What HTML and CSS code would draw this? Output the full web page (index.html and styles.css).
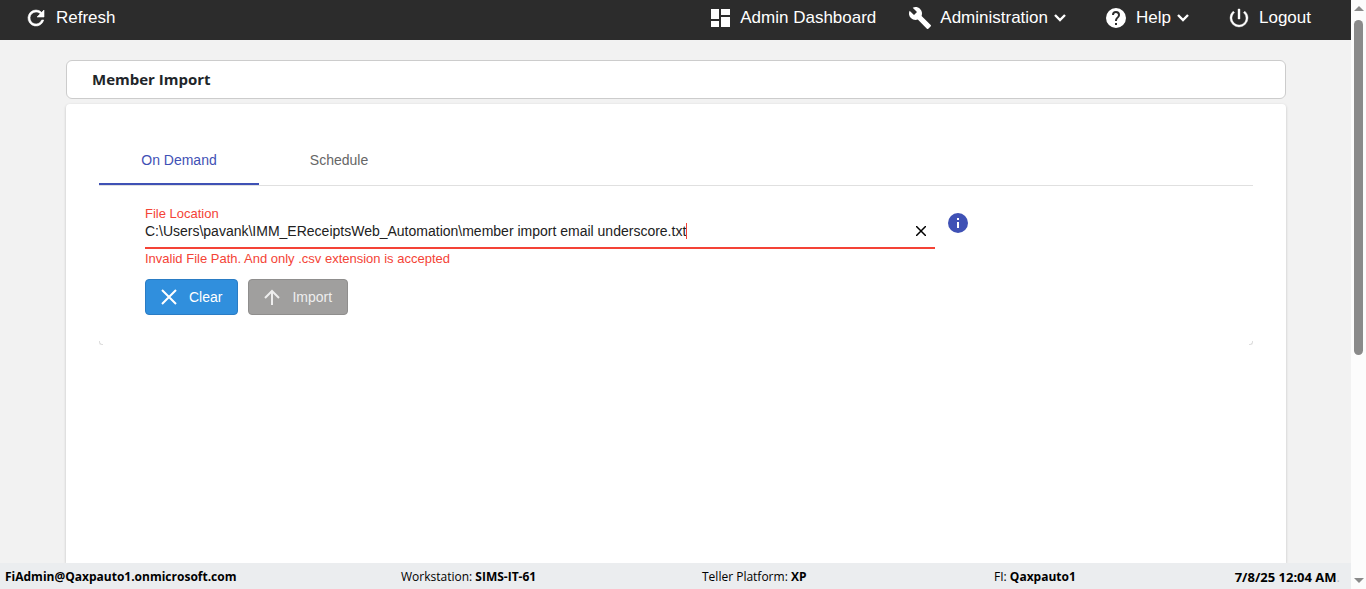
FILE: index.html
```
<!DOCTYPE html>
<html lang="en">
<head>
<meta charset="utf-8">
<meta name="viewport" content="width=device-width, initial-scale=1">
<title>Member Import</title>
<link rel="stylesheet" href="styles.css">
</head>
<body>
<div class="shell">
  <div class="app">
    <header class="topbar">
      <button class="nav-item" type="button">
        <svg class="icon" viewBox="0 0 24 24"><path d="M17.65 6.35A7.96 7.96 0 0 0 12 4a8 8 0 1 0 7.73 10h-2.08A6 6 0 1 1 12 6c1.66 0 3.14.69 4.22 1.78L13 11h7V4z" stroke="currentColor" stroke-width=".6"/></svg>
        <span>Refresh</span>
      </button>
      <nav class="nav">
        <a class="nav-item" href="#">
          <svg class="icon" viewBox="0 0 24 24"><path d="M3 3h8v10H3zM13 3h9v6h-9zM3 15h8v6H3zM13 11h9v10h-9z"/></svg>
          <span>Admin Dashboard</span>
        </a>
        <button class="nav-item" type="button">
          <svg class="icon" viewBox="0 0 24 24"><path d="M22.7 19l-9.1-9.1c.9-2.3.4-5-1.5-6.9-2-2-5-2.4-7.4-1.3L9 6 6 9 1.6 4.7C.4 7.100.900 10.100 2.900 12.100c1.900 1.900 4.600 2.400 6.900 1.500l9.100 9.100c.4.4 1 .4 1.400 0l2.300-2.300c.5-.4.5-1.100.1-1.400z"/></svg>
          <span>Administration</span>
          <svg class="chevron" viewBox="0 0 12 8"><path d="M1 1l5 5 5-5"/></svg>
        </button>
        <button class="nav-item" type="button">
          <svg class="icon" viewBox="0 0 24 24"><path d="M12 2a10 10 0 1 0 0 20 10 10 0 0 0 0-20zm1 17h-2v-2h2zm2.070-7.750l-.9.920C13.450 12.900 13 13.500 13 15h-2v-.5c0-1.100.450-2.100 1.170-2.830l1.240-1.260A2 2 0 1 0 10 9H8a4 4 0 1 1 8 0c0 .880-.360 1.680-.930 2.250z"/></svg>
          <span>Help</span>
          <svg class="chevron" viewBox="0 0 12 8"><path d="M1 1l5 5 5-5"/></svg>
        </button>
        <button class="nav-item" type="button">
          <svg class="icon" viewBox="0 0 24 24"><path d="M13 3h-2v10h2zm4.830 2.170l-1.420 1.420A6.920 6.920 0 0 1 19 12a7 7 0 1 1-11.420-5.420L6.170 5.170A8.930 8.930 0 0 0 3 12a9 9 0 0 0 18 0c0-2.740-1.230-5.180-3.170-6.830z" stroke="currentColor" stroke-width=".4"/></svg>
          <span>Logout</span>
        </button>
      </nav>
    </header>

    <main class="content">
      <h1 class="title">Member Import</h1>
      <section class="card">
        <div class="tabs" role="tablist">
          <button class="tab tab-active" type="button" role="tab" aria-selected="true">On Demand</button>
          <button class="tab" type="button" role="tab" aria-selected="false">Schedule</button>
        </div>
        <form class="panel">
          <div class="row">
            <div class="field">
              <label class="label" for="file">File Location</label>
              <div class="control">
                <input class="input" id="file" type="text" spellcheck="false" aria-invalid="true" aria-describedby="file-error" value="C:\Users\pavank\IMM_EReceiptsWeb_Automation\member import email underscore.txt">
                <span class="caret"></span>
                <button class="wipe" type="button" aria-label="Clear file location">
                  <svg viewBox="0 0 10 10"><path d="M0 0l10 10M10 0L0 10"/></svg>
                </button>
              </div>
              <p class="error" id="file-error">Invalid File Path. And only .csv extension is accepted</p>
            </div>
            <button class="info" type="button" aria-label="Information">
              <svg viewBox="0 0 20 20"><circle cx="10" cy="10" r="10" fill="#3f51b5"/><path d="M9 5h2v2H9zM9 9h2v6H9z" fill="#fff"/></svg>
            </button>
          </div>
          <div class="actions">
            <button class="btn btn-clear" type="button">
              <svg viewBox="0 0 16 16"><path d="M1 1l14 14M15 1L1 15"/></svg>Clear
            </button>
            <button class="btn btn-import" type="button" disabled>
              <svg viewBox="0 0 16 16"><path d="M8 16V2M1 9l7-7 7 7"/></svg>Import
            </button>
          </div>
        </form>
      </section>
    </main>

    <footer class="status">
      <span><b>FiAdmin@Qaxpauto1.onmicrosoft.com</b></span>
      <span>Workstation: <b>SIMS-IT-61</b></span>
      <span>Teller Platform: <b>XP</b></span>
      <span>FI: <b>Qaxpauto1</b></span>
      <span class="clock"><b>7/8/25 12:04 AM</b><i class="dot">.</i></span>
    </footer>
  </div>

  <div class="scrollbar" aria-hidden="true">
    <svg class="arrow" viewBox="0 0 10 5"><path d="M0 5l5-5 5 5z"/></svg>
    <div class="track"><div class="thumb"></div></div>
    <svg class="arrow" viewBox="0 0 10 5"><path d="M0 0l5 5 5-5z"/></svg>
  </div>
</div>
</body>
</html>
```
FILE: styles.css
```
* { box-sizing: border-box; }

body {
  margin: 0;
  font-family: "Liberation Sans", Arial, sans-serif;
  font-size: 14px;
  color: #212529;
  background: #f2f2f2;
}

button, input { font: inherit; color: inherit; }
button { margin: 0; padding: 0; border: 0; background: none; cursor: pointer; }
svg { display: block; flex: none; }

.shell { display: flex; height: 100vh; }
.app { flex: 1; min-width: 0; display: flex; flex-direction: column; }

.topbar {
  flex: none;
  display: flex;
  justify-content: space-between;
  height: 40px;
  padding: 0 40px 5px 24px;
  background: #2c2c2c;
  color: #fff;
}
.nav { display: flex; gap: 32px; }
.nav-item {
  display: flex;
  align-items: center;
  font-size: 17px;
  white-space: nowrap;
  color: #fff;
  text-decoration: none;
}
.icon { width: 24px; height: 24px; margin-right: 8px; fill: currentColor; }
.chevron { width: 12px; height: 8px; margin: 0 6px; fill: none; stroke: currentColor; stroke-width: 2.4; }

.content {
  flex: 1;
  min-height: 0;
  overflow: hidden;
  display: flex;
  flex-direction: column;
  gap: 5px;
  padding: 20px 65px 0 66px;
}
.title {
  flex: none;
  margin: 0;
  padding: 9px 25px;
  border: 1px solid #ccc;
  border-radius: 6px;
  background: #fff;
  font: 700 15px/19px "Open Sans", "Noto Sans", sans-serif;
}
.card {
  flex: 1;
  padding: 33px;
  border-radius: 4px 4px 0 0;
  background: #fff;
  box-shadow: 0 1px 3px rgba(0, 0, 0, .2);
}

.tabs { display: flex; border-bottom: 1px solid #e0e0e0; }
.tab { width: 160px; height: 48px; color: #666; border-bottom: 2px solid transparent; }
.tab-active { color: #3f51b5; border-bottom-color: #3f51b5; }

.panel {
  position: relative;
  padding: 20px 46px 30px;
}
.panel::before,
.panel::after {
  content: "";
  position: absolute;
  bottom: 0;
  width: 3px;
  height: 3px;
  border-bottom: 1px solid #ddd;
}
.panel::before { left: 0; border-left: 1px solid #ddd; border-bottom-left-radius: 3px; }
.panel::after { right: 0; border-right: 1px solid #ddd; border-bottom-right-radius: 3px; }

.row { display: flex; gap: 13px; }
.field { flex: 0 1 790px; min-width: 0; }
.label { display: block; font-size: 13px; line-height: 16px; color: #f44336; }
.control {
  display: flex;
  align-items: center;
  height: 27px;
  padding: 0 9px 8px 0;
  border-bottom: 2px solid #f44336;
}
.input {
  field-sizing: content;
  min-width: 0;
  padding: 0;
  border: 0;
  outline: 0;
  background: none;
  color: #212121;
}
.caret { flex: none; width: 1px; height: 16px; background: #f44336; }
.wipe { margin-left: auto; }
.wipe svg { width: 10px; height: 10px; fill: none; stroke: #000; stroke-width: 1.5; }
.error { margin: 2px 0 0; font-size: 13px; line-height: 16px; color: #f44336; }
.info { align-self: flex-start; padding-top: 7px; }
.info svg { width: 20px; height: 20px; }

.actions { display: flex; gap: 10px; padding-top: 12px; }
.btn {
  display: flex;
  align-items: center;
  gap: 12px;
  height: 36px;
  padding: 0 15px;
  border: 1px solid #2a7cc4;
  border-radius: 4px;
  background: #308fdd;
  color: #fff;
}
.btn svg { width: 16px; height: 16px; fill: none; stroke: currentColor; stroke-width: 2; }
.btn-import { border-color: #8f8e8d; background: #a09f9e; color: #eee; }

.status {
  flex: none;
  display: grid;
  grid-template-columns: 396fr 301fr 292fr 240fr 106fr;
  align-items: center;
  height: 26px;
  padding: 1px 11px 0 5px;
  background: #ebedef;
  color: #000;
  font: 12px/18px "Open Sans", "Noto Sans", sans-serif;
  white-space: nowrap;
}
.clock { justify-self: end; font-size: 13px; }
.dot { font-style: normal; color: #b8bcc0; }

.scrollbar {
  flex: none;
  display: flex;
  flex-direction: column;
  align-items: center;
  width: 15px;
  padding: 6px 0;
  background: #fcfcfc;
}
.arrow { width: 10px; height: 5px; fill: #8a8a8a; }
.track { flex: 1; padding: 9px 0; }
.thumb { width: 9px; height: 61%; border-radius: 5px; background: #8a8a8a; }
```
